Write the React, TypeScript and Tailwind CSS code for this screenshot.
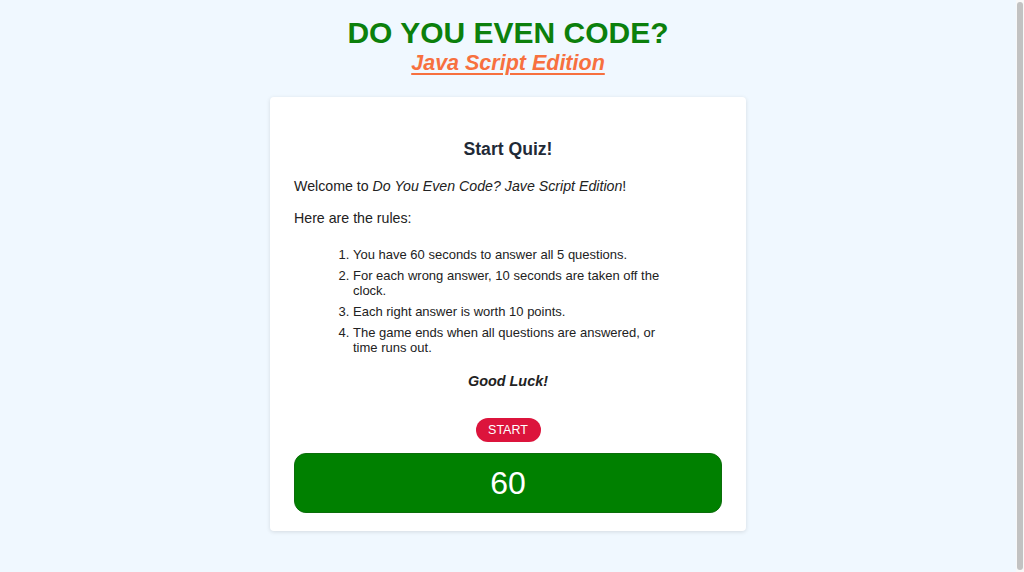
import React from "react";

export default function App() {
  return (
    <div className="flex h-[572px] w-[1024px] overflow-hidden" style={{ fontFamily: '"Liberation Sans", Arial, sans-serif' }}>
      <main className="flex flex-1 flex-col items-center bg-[#f0f8ff] pt-[16px]">
        <h1 className="text-[30px] font-bold leading-[34px] text-[#0c800c]">DO YOU EVEN CODE?</h1>
        <h2 className="text-[21.5px] font-bold italic leading-[26px] text-[#f7703f] underline decoration-[2px] underline-offset-[3px]">
          Java Script Edition
        </h2>
        <section className="mt-[21px] flex w-[476px] flex-col rounded-[4px] bg-white px-[24px] pb-[18px] pt-[41px] shadow-[0_1px_4px_rgba(0,0,0,0.12)] text-[#222]">
          <h3 className="text-center text-[17.6px] font-bold leading-[22px] text-[#1f2a37]">Start Quiz!</h3>
          <p className="mt-[16px] text-[14.2px] leading-[20px]">
            Welcome to <em>Do You Even Code? Jave Script Edition</em>!
          </p>
          <p className="mt-[12px] text-[14.2px] leading-[20px]">Here are the rules:</p>
          <ol className="mt-[19px] flex list-decimal flex-col gap-[6px] pl-[59px] pr-[50px] text-[13px] leading-[15px]">
            <li>You have 60 seconds to answer all 5 questions.</li>
            <li>For each wrong answer, 10 seconds are taken off the clock.</li>
            <li>Each right answer is worth 10 points.</li>
            <li>The game ends when all questions are answered, or time runs out.</li>
          </ol>
          <p className="mt-[16px] text-center text-[14.4px] font-bold italic leading-[20px]">Good Luck!</p>
          <div className="mt-[27px] flex justify-center">
            <button className="h-[24px] w-[65px] rounded-full bg-[#dc143c] text-[12.5px] leading-[24px] text-white">START</button>
          </div>
          <div className="mt-[11px] flex h-[60px] items-center justify-center rounded-[12px] border border-[#0b6e0b] bg-[#008000] text-[32px] text-white">
            60
          </div>
        </section>
      </main>
      <div className="flex w-[8px] flex-col bg-[#f8f8f8] py-[2px] pl-[1px] pr-[1px]">
        <div className="flex-1 rounded-full bg-[#c2c2c2]" />
      </div>
    </div>
  );
}
